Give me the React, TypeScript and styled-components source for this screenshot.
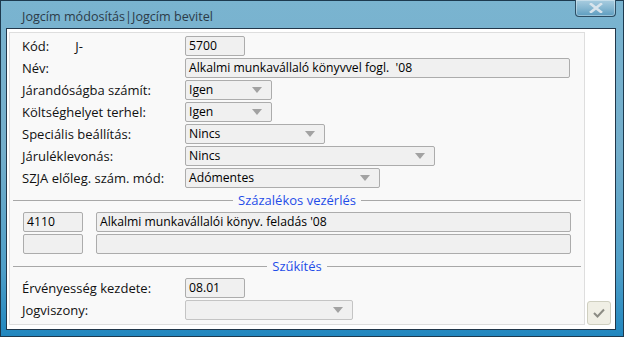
import * as React from "react";
import styled, { createGlobalStyle } from "styled-components";

const GlobalStyle = createGlobalStyle`
  html, body {
    margin: 0;
    padding: 0;
    background: #ffffff;
  }
  body {
    font-family: "Open Sans", "Noto Sans", "Liberation Sans", sans-serif;
    font-size: 13px;
  }
`;

interface Row {
  label: string;
  kind: "input" | "select";
  value: string;
  width: number;
  muted?: boolean;
}

const topRows: Row[] = [
  { label: "Név:", kind: "input", value: "Alkalmi munkavállaló könyvvel fogl.  '08", width: 385 },
  { label: "Járandóságba számít:", kind: "select", value: "Igen", width: 87 },
  { label: "Költséghelyet terhel:", kind: "select", value: "Igen", width: 87 },
  { label: "Speciális beállítás:", kind: "select", value: "Nincs", width: 140 },
  { label: "Járuléklevonás:", kind: "select", value: "Nincs", width: 250 },
  { label: "SZJA előleg. szám. mód:", kind: "select", value: "Adómentes", width: 195 },
];

const Field: React.FC<{ row: Row }> = ({ row }) =>
  row.kind === "select" ? (
    <SelectBox $w={row.width} $muted={row.muted}>
      <span>{row.value}</span>
      <Arrow />
    </SelectBox>
  ) : (
    <InputBox $w={row.width}>{row.value}</InputBox>
  );

const Separator: React.FC<{ title: string }> = ({ title }) => (
  <SeparatorRow>
    <Line />
    <SeparatorText>{title}</SeparatorText>
    <Line />
  </SeparatorRow>
);

const App: React.FC = () => {
  return (
    <>
      <GlobalStyle />
      <Frame>
        <TitleBar>
          <Title>Jogcím módosítás|Jogcím bevitel</Title>
          <CloseButton>
            <svg width="16" height="10" viewBox="0 0 16 10">
              <path d="M3 1 L13 9 M13 1 L3 9" stroke="#d8e4ec" strokeWidth="2.6" strokeLinecap="square" />
            </svg>
          </CloseButton>
        </TitleBar>
        <Client>
          <Panel>
            <FormRow>
              <Label>
                Kód:<Prefix>J-</Prefix>
              </Label>
              <InputBox $w={60}>5700</InputBox>
            </FormRow>
            {topRows.map((r) => (
              <FormRow key={r.label}>
                <Label>{r.label}</Label>
                <Field row={r} />
              </FormRow>
            ))}
            <Separator title="Százalékos vezérlés" />
            <PairRow>
              <InputBox $w={60}>4110</InputBox>
              <InputBox $w={475}>Alkalmi munkavállalói könyv. feladás '08</InputBox>
            </PairRow>
            <PairRow>
              <InputBox $w={60} />
              <InputBox $w={475} />
            </PairRow>
            <Separator title="Szűkítés" />
            <FormRow>
              <Label>Érvényesség kezdete:</Label>
              <InputBox $w={60}>08.01</InputBox>
            </FormRow>
            <FormRow>
              <Label>Jogviszony:</Label>
              <SelectBox $w={168} $muted>
                <span />
                <Arrow />
              </SelectBox>
            </FormRow>
          </Panel>
          <Side>
            <OkButton>
              <svg width="14" height="12" viewBox="0 0 14 12">
                <path d="M2 6 L5.5 9.5 L12 2.5" fill="none" stroke="#8c8c84" strokeWidth="2" />
              </svg>
            </OkButton>
          </Side>
        </Client>
      </Frame>
    </>
  );
};

export default App;

const Frame = styled.div`
  width: 624px;
  height: 337px;
  box-sizing: border-box;
  border: 1px solid #1d3a4f;
  background: linear-gradient(180deg, #7ab4d0 0%, #73aecb 45%, #4f9fc8 80%, #2187bf 100%);
  display: flex;
  flex-direction: column;
`;

const TitleBar = styled.div`
  height: 27px;
  display: flex;
  justify-content: space-between;
  align-items: flex-start;
  padding: 0 7px 0 21px;
`;

const Title = styled.div`
  padding-top: 7px;
  color: #2c3b48;
  font-size: 12.6px;
  line-height: 17px;
`;

const CloseButton = styled.div`
  width: 41px;
  height: 17px;
  margin-top: -1px;
  box-sizing: border-box;
  border: 1px solid #2c4d63;
  border-top: none;
  border-radius: 0 0 4px 4px;
  background: linear-gradient(180deg, #a9cde0 0%, #86b7d1 50%, #5c9cbf 100%);
  box-shadow: inset 0 0 0 1px rgba(255, 255, 255, 0.35);
  display: flex;
  align-items: center;
  justify-content: center;
`;

const Client = styled.div`
  flex: 1;
  margin: 0 7px 6px 5px;
  border: 1px solid #22374a;
  background: #ffffff;
  display: flex;
  padding: 3px 2px 4px 2px;
`;

const Panel = styled.div`
  width: 576px;
  box-sizing: border-box;
  border: 1px solid #dedede;
  background: #f9f9f9;
  padding: 3px 3px 0 3px;
  display: flex;
  flex-direction: column;
  gap: 2px;
`;

const Side = styled.div`
  flex: 1;
  display: flex;
  align-items: flex-end;
  justify-content: center;
`;

const OkButton = styled.div`
  width: 24px;
  height: 24px;
  box-sizing: border-box;
  border: 1px solid #cfcfc0;
  border-radius: 3px;
  background: #f0efe5;
  display: flex;
  align-items: center;
  justify-content: center;
`;

const FormRow = styled.div`
  height: 20px;
  display: flex;
  align-items: center;
  padding-left: 9px;
`;

const PairRow = styled.div`
  height: 20px;
  display: flex;
  align-items: center;
  gap: 13px;
  padding-left: 10px;
`;

const Label = styled.div`
  width: 163px;
  color: #111111;
  white-space: nowrap;
`;

const Prefix = styled.span`
  margin-left: 26px;
`;

const InputBox = styled.div<{ $w: number }>`
  width: ${(p) => p.$w}px;
  height: 20px;
  box-sizing: border-box;
  border: 1px solid #acacac;
  border-radius: 2px;
  background: #f0f0f0;
  padding: 0 3px;
  font-size: 12.2px;
  line-height: 18px;
  color: #000000;
  white-space: pre;
  overflow: hidden;
`;

const SelectBox = styled.div<{ $w: number; $muted?: boolean }>`
  width: ${(p) => p.$w}px;
  height: 20px;
  box-sizing: border-box;
  border: 1px solid ${(p) => (p.$muted ? "#c4c4c4" : "#acacac")};
  border-radius: 2px;
  background: #f0f0f0;
  padding: 0 9px 0 3px;
  font-size: 12.2px;
  line-height: 18px;
  color: #000000;
  display: flex;
  align-items: center;
  justify-content: space-between;
`;

const Arrow = styled.div`
  width: 0;
  height: 0;
  border-left: 5px solid transparent;
  border-right: 5px solid transparent;
  border-top: 6px solid #a2a2a2;
`;

const SeparatorRow = styled.div`
  height: 20px;
  display: flex;
  align-items: center;
  gap: 5px;
`;

const Line = styled.div`
  flex: 1;
  height: 1px;
  background: #a8a8a8;
`;

const SeparatorText = styled.div`
  color: #1f4de8;
  line-height: 16px;
`;
